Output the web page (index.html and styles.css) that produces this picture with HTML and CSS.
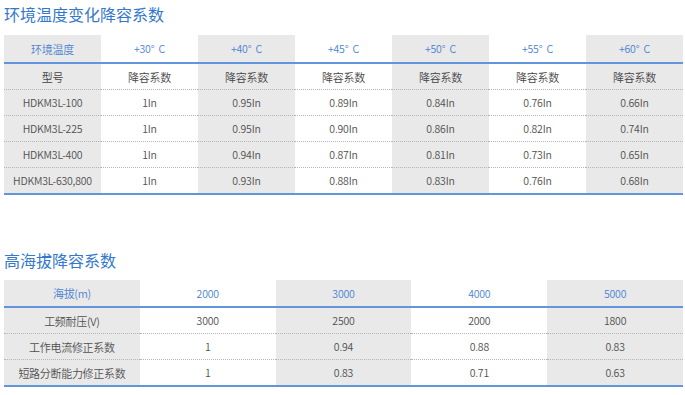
FILE: index.html
```html
<!DOCTYPE html>
<html lang="zh">
<head>
<meta charset="utf-8">
<link rel="stylesheet" href="styles.css">
</head>
<body>
<div class="page">
  <h2 class="title first">环境温度变化降容系数</h2>
  <table class="grid t1">
    <tr class="head">
      <td class="zh">环境温度</td><td>+30°&nbsp; C</td><td>+40°&nbsp; C</td><td>+45°&nbsp; C</td><td>+50°&nbsp; C</td><td>+55°&nbsp; C</td><td>+60°&nbsp; C</td>
    </tr>
    <tr class="sub">
      <td class="zh">型号</td><td class="zh">降容系数</td><td class="zh">降容系数</td><td class="zh">降容系数</td><td class="zh">降容系数</td><td class="zh">降容系数</td><td class="zh">降容系数</td>
    </tr>
    <tr><td>HDKM3L-100</td><td>1In</td><td>0.95In</td><td>0.89In</td><td>0.84In</td><td>0.76In</td><td>0.66In</td></tr>
    <tr><td>HDKM3L-225</td><td>1In</td><td>0.95In</td><td>0.90In</td><td>0.86In</td><td>0.82In</td><td>0.74In</td></tr>
    <tr><td>HDKM3L-400</td><td>1In</td><td>0.94In</td><td>0.87In</td><td>0.81In</td><td>0.73In</td><td>0.65In</td></tr>
    <tr class="last"><td>HDKM3L-630,800</td><td>1In</td><td>0.93In</td><td>0.88In</td><td>0.83In</td><td>0.76In</td><td>0.68In</td></tr>
  </table>

  <h2 class="title second">高海拔降容系数</h2>
  <table class="grid t2">
    <tr class="head">
      <td class="zh">海拔(m)</td><td>2000</td><td>3000</td><td>4000</td><td>5000</td>
    </tr>
    <tr><td class="zh">工频耐压(V)</td><td>3000</td><td>2500</td><td>2000</td><td>1800</td></tr>
    <tr><td class="zh">工作电流修正系数</td><td>1</td><td>0.94</td><td>0.88</td><td>0.83</td></tr>
    <tr class="last"><td class="zh">短路分断能力修正系数</td><td>1</td><td>0.83</td><td>0.71</td><td>0.63</td></tr>
  </table>
</div>
</body>
</html>
```

FILE: styles.css
```css
html, body {
  margin: 0;
  padding: 0;
  background: #ffffff;
}

body {
  font-family: "Noto Sans CJK SC", "Noto Sans", sans-serif;
}

.page {
  width: 679px;
  padding: 0 2px 0 4px;
}

.title {
  margin: 0;
  font-size: 16px;
  line-height: 24px;
  font-weight: normal;
  color: #3378cc;
}

.title.first {
  margin-top: 2px;
  margin-bottom: 9px;
}

.title.second {
  margin-top: 53px;
  margin-bottom: 8px;
}

.grid {
  width: 679px;
  border-collapse: collapse;
  table-layout: fixed;
  font-size: 10.5px;
  letter-spacing: -0.2px;
  font-weight: 350;
  color: #505050;
}

.grid td {
  padding: 0;
  text-align: center;
  vertical-align: middle;
  height: 25px;
  border-bottom: 1px dotted #b4b4b4;
  white-space: nowrap;
}

.grid td.zh {
  font-size: 11px;
  letter-spacing: -0.3px;
}

.grid td:nth-child(odd) {
  background: #e9e9e9;
}

.grid .head td {
  color: #4a82d2;
  height: 27px;
  border-bottom: 2px solid #6295dc;
}

.t2 .head td {
  height: 26px;
}

.grid .sub td {
  color: #444444;
}

.grid .last td {
  border-bottom: 2px solid #6295dc;
}
```
